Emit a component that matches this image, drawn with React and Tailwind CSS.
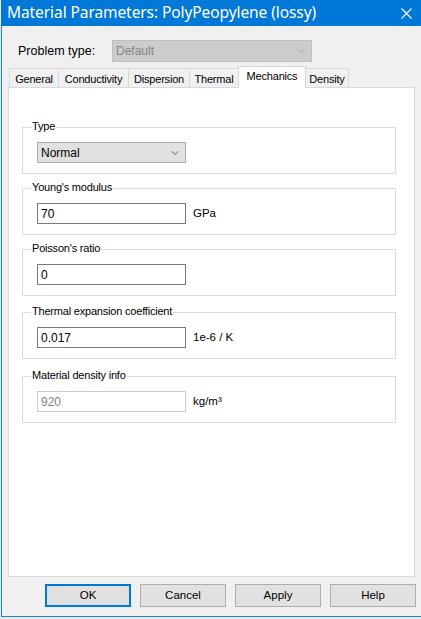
import { ChevronDown } from 'lucide-react';

const tabs = [
  { label: 'General', w: 'w-[50px]' },
  { label: 'Conductivity', w: 'w-[71px]' },
  { label: 'Dispersion', w: 'w-[62px]' },
  { label: 'Thermal', w: 'w-[50px]' },
  { label: 'Mechanics', w: 'w-[68px]', active: true },
  { label: 'Density', w: 'w-[44px]' },
];

function Group({ title, mt, children }) {
  return (
    <div className={`relative ${mt} h-[47px] w-[374px] border border-[#dcdcdc] pl-[14px] pt-[14px]`}>
      <span className="absolute -top-[8px] left-[8px] bg-white px-[1px] text-[11px] leading-[13px] tracking-[-0.2px] text-black">
        {title}
      </span>
      <div className="flex items-center">{children}</div>
    </div>
  );
}

function Field({ value, unit, disabled }) {
  return (
    <>
      <div
        className={`flex h-[21px] w-[149px] items-center border bg-white pl-[3px] text-[12px] ${
          disabled ? 'border-[#cccccc] text-[#838383]' : 'border-[#7a7a7a] text-black'
        }`}
      >
        {value}
      </div>
      {unit && <span className="ml-[7px] text-[11.5px] text-black">{unit}</span>}
    </>
  );
}

export default function App() {
  return (
    <div className="h-[619px] w-[421px] overflow-hidden bg-[#e9e9e9] font-['Liberation_Sans',Arial,sans-serif]">
      <div className="ml-[1px] flex h-[617px] w-[420px] flex-col border-b border-l border-[#1883d7] bg-[#f0f0f0]">
        {/* title bar */}
        <div className="-ml-[1px] flex h-[26px] items-center justify-between bg-[#0078d7] pl-[6px] pr-[8px] text-white">
          <span className="font-['Noto_Sans',sans-serif] text-[15.5px] leading-none tracking-[-0.08px]">
            Material Parameters: PolyPeopylene (lossy)
          </span>
          <svg width="11" height="11" viewBox="0 0 11 11" className="mr-[1px]">
            <path d="M0.5 0.5 L10.5 10.5 M10.5 0.5 L0.5 10.5" stroke="white" strokeWidth="1.1" />
          </svg>
        </div>

        {/* problem type */}
        <div className="mt-[14px] flex h-[22px] items-center">
          <span className="ml-[16px] w-[94px] text-[12.5px] text-black">Problem type:</span>
          <div className="flex h-[22px] w-[200px] items-center justify-between border border-[#bfbfbf] bg-[#cccccc] pl-[3px] pr-[4px] text-[12px] text-[#838383]">
            <span>Default</span>
            <ChevronDown className="h-[12px] w-[12px] text-[#a0a0a0]" strokeWidth={1.5} />
          </div>
        </div>

        {/* tabs */}
        <div className="ml-[7px] mt-[5px] flex h-[20px] items-end">
          {tabs.map((t, i) =>
            t.active ? (
              <div
                key={t.label}
                className={`relative z-10 -mb-[1px] ${t.w} ${i ? '-ml-[1px]' : ''} flex h-[22px] justify-center border-x border-t border-[#d9d9d9] bg-white pt-[3px] text-[11px] leading-[13px] tracking-[-0.2px] text-black`}
              >
                {t.label}
              </div>
            ) : (
              <div
                key={t.label}
                className={`${t.w} ${i ? '-ml-[1px]' : ''} flex h-[19px] justify-center border-x border-t border-[#d9d9d9] bg-[#f0f0f0] pt-[4px] text-[11px] leading-[13px] tracking-[-0.2px] text-black`}
              >
                {t.label}
              </div>
            )
          )}
        </div>

        {/* tab panel */}
        <div className="ml-[6px] h-[490px] w-[407px] border border-[#d9d9d9] bg-white pl-[13px] pt-[39px]">
          <Group title="Type" mt="mt-0">
            <div className="flex h-[21px] w-[149px] items-center justify-between border border-[#adadad] bg-[#e1e1e1] pl-[3px] pr-[4px] text-[12px] text-black">
              <span>Normal</span>
              <ChevronDown className="h-[12px] w-[12px] text-[#333]" strokeWidth={1.5} />
            </div>
          </Group>
          <Group title="Young's modulus" mt="mt-[14px]">
            <Field value="70" unit="GPa" />
          </Group>
          <Group title="Poisson's ratio" mt="mt-[14px]">
            <Field value="0" />
          </Group>
          <Group title="Thermal expansion coefficient" mt="mt-[16px]">
            <Field value="0.017" unit="1e-6 / K" />
          </Group>
          <Group title="Material density info" mt="mt-[17px]">
            <Field value="920" unit="kg/m³" disabled />
          </Group>
        </div>

        {/* buttons */}
        <div className="ml-[43px] mt-[7px] flex gap-[9px]">
          <button className="h-[23px] w-[86px] border-2 border-[#0078d7] bg-[#e1e1e1] text-[11.5px] text-black">OK</button>
          <button className="h-[23px] w-[86px] border border-[#adadad] bg-[#e1e1e1] text-[11.5px] text-black">Cancel</button>
          <button className="h-[23px] w-[86px] border border-[#adadad] bg-[#e1e1e1] text-[11.5px] text-black">Apply</button>
          <button className="h-[23px] w-[86px] border border-[#adadad] bg-[#e1e1e1] text-[11.5px] text-black">Help</button>
        </div>
      </div>
    </div>
  );
}
